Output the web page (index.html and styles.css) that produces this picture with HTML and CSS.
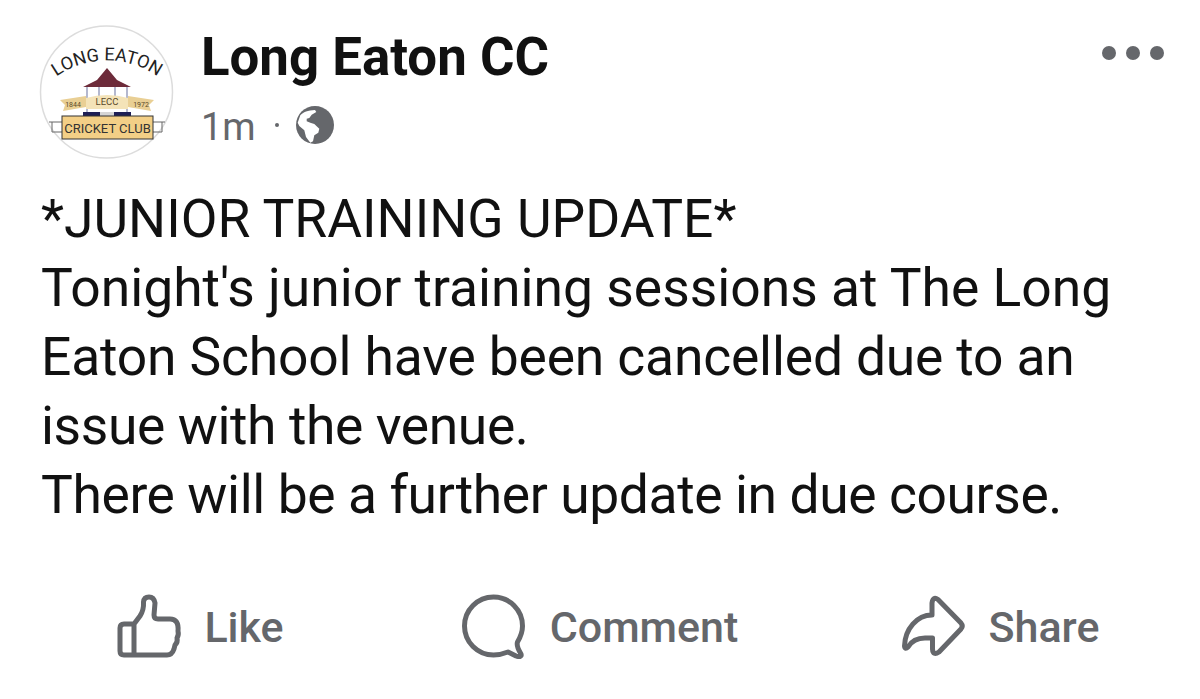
FILE: index.html
```html
<!DOCTYPE html>
<html lang="en">
<head>
    <meta charset="UTF-8">
    <meta name="viewport" content="width=device-width, initial-scale=1.0">
    <title>Long Eaton CC</title>
    <link rel="stylesheet" href="styles.css">
</head>
<body>
    <div class="post">
        <div class="post-header">
            <svg class="avatar" width="140" height="140" viewBox="0 0 140 140">
                <circle cx="69.5" cy="72" r="66" fill="#fff" stroke="#dcdcdc" stroke-width="1.5"/>
                <defs><path id="logo-arc" d="M8 66 A88 88 0 0 1 132 66"/></defs>
                <text class="logo-top"><textPath href="#logo-arc" startOffset="50%" text-anchor="middle">LONG EATON</textPath></text>
                <path d="M70 48 L80 60 L94 67 H46 L60 60 Z" fill="#6d2b3a"/>
                <path d="M50 67 V92 M62 67 V78 M78 67 V78 M90 67 V92" stroke="#8d93b5" stroke-width="1.3" fill="none"/>
                <path d="M23 80 L49 76 V87 L26 91 L28 85 Z" fill="#e9cf94"/>
                <path d="M117 80 L91 76 V87 L114 91 L112 85 Z" fill="#e9cf94"/>
                <path d="M49 78 Q70 72 91 78 V89 H49 Z" fill="#f4e3b8"/>
                <text class="logo-small" x="36" y="87" text-anchor="middle">1844</text>
                <text class="logo-small" x="104" y="87" text-anchor="middle">1972</text>
                <text class="logo-lecc" x="70" y="85" text-anchor="middle">LECC</text>
                <rect x="46" y="92" width="17" height="5" fill="#1e1f55"/>
                <rect x="77" y="92" width="17" height="5" fill="#1e1f55"/>
                <rect x="63" y="92" width="14" height="5" fill="#d5d5d5"/>
                <path d="M25 102 H12 M15 102 V112 H25 M115 102 H128 M125 102 V112 H115" stroke="#666" stroke-width="1" fill="none"/>
                <rect x="25" y="96" width="91" height="23" fill="#f3cf86" stroke="#333" stroke-width="1"/>
                <text class="logo-club" x="70.5" y="113" text-anchor="middle">CRICKET CLUB</text>
            </svg>
            <div class="post-meta">
                <h2 class="page-name">Long Eaton CC</h2>
                <div class="post-time">
                    <span class="time-text">1m</span>
                    <span class="dot"></span>
                    <svg class="globe" width="40" height="40" viewBox="0 0 40 40">
                        <circle cx="20" cy="20" r="19" fill="#65676b"/>
                        <path d="M5.3 10.3 C8 7 13 5.5 20 5 L21.3 7 L16.7 9.7 L14.3 13 L11.7 13.7 L11.7 16.3 L15.3 17.7 L19.3 19 L24.3 23.7 L23.3 27.7 L19.3 30.3 L18 36.3 L15.3 37.7 L11 32 L9.3 25.3 L4.3 21 L2.7 17.7 Z" fill="#fff"/>
                    </svg>
                </div>
            </div>
            <div class="more">
                <span></span><span></span><span></span>
            </div>
        </div>
        <div class="post-body">
            <p>*JUNIOR TRAINING UPDATE*</p>
            <p>Tonight's junior training sessions at The Long <span class="tight-a">Eaton School have been cancelled due to an</span> <span class="tight-b">issue with the venue.</span></p>
            <p class="tight-b">There will be a further update in due course.</p>
        </div>
        <div class="post-actions">
            <div class="action">
                <svg width="66" height="66" viewBox="0 -1 66 66" fill="none">
                    <path d="M18 30 H8 Q4 30 4 34 V57 Q4 61 8 61 H51 Q56 61 58 55 L59 51 Q62 48 61 44 Q63 41 62 37 Q63 25 54 25 H42 Q38 25 38 21 L39 9 Q38 3 33 3 Q28 3 27.5 8 Q28 16 24 22 L18 30 V61"/>
                </svg>
                <span class="action-label">Like</span>
            </div>
            <div class="action">
                <svg width="66" height="66" viewBox="0 0 66 66" fill="none">
                    <path d="M46 59 C41 61 36 62 31.5 62 C15.5 62 2.5 49 2.5 33 C2.5 17 15.5 4 31.5 4 C47.5 4 60.5 17 60.5 33 C60.5 39 58.5 44 55.5 49 C54.5 52 56.5 57 59 61 C60 64 57 64 54 63 Z"/>
                </svg>
                <span class="action-label">Comment</span>
            </div>
            <div class="action">
                <svg width="66" height="66" viewBox="0 0 66 66" fill="none">
                    <path d="M37 6.5 L60 30 Q62.5 33 60 36 L38 59 Q32 63 31.5 56 V45 H24 C15 45 10 49 7 54 Q4 57 3.5 53 C4 36 16 22 31 22 V10 Q32 3 37 6.5 Z"/>
                </svg>
                <span class="action-label">Share</span>
            </div>
        </div>
    </div>
</body>
</html>
```

FILE: styles.css
```css
body {
    margin: 0;
    background: #fff;
    font-family: Roboto, "Liberation Sans", sans-serif;
    color: #111;
}

.post {
    width: 1200px;
    height: 699px;
    display: flex;
    flex-direction: column;
    overflow: hidden;
}

.post-header {
    display: flex;
    padding: 20px 36px 0 37px;
    height: 140px;
}

.avatar {
    flex: none;
}

.post-meta {
    margin-left: 24px;
    flex: 1;
}

.page-name {
    margin: 10px 0 0;
    font-size: 52.800px;
    line-height: 54px;
    font-weight: 700;
    color: #111;
}

.post-time {
    display: flex;
    align-items: center;
    margin-top: 19px;
    font-size: 38px;
    line-height: 40px;
    color: #65676b;
}

.time-text {
    margin-top: 4px;
}

.dot {
    width: 4px;
    height: 4px;
    margin: 0 16px 0 19px;
    border-radius: 50%;
    background: #65676b;
}

.more {
    display: flex;
    gap: 10px;
    margin-top: 26px;
}

.more span {
    width: 14px;
    height: 14px;
    border-radius: 50%;
    background: #65676b;
}

.post-body {
    padding: 24px 40px 0 41px;
    font-size: 53.400px;
    line-height: 69px;
}

.post-body p {
    margin: 0;
}

.tight-a {
    letter-spacing: -0.17px;
}

.tight-b {
    letter-spacing: -0.4px;
}

.post-actions {
    display: grid;
    grid-template-columns: repeat(3, 1fr);
    margin-top: 64px;
}

.action {
    display: flex;
    justify-content: center;
    align-items: center;
    gap: 22px;
    font-size: 43px;
    font-weight: 500;
    color: #65676b;
}

.action-label {
    margin-top: 2px;
}

.action svg {
    stroke: #65676b;
    stroke-width: 5;
    stroke-linejoin: round;
    stroke-linecap: round;
}

.logo-top {
    font-size: 18px;
    fill: #222;
}

.logo-small {
    font-size: 7px;
    fill: #5a4a2a;
}

.logo-lecc {
    font-size: 9.500px;
    fill: #5a4a2a;
}

.logo-club {
    font-size: 13px;
    fill: #333;
}
```
